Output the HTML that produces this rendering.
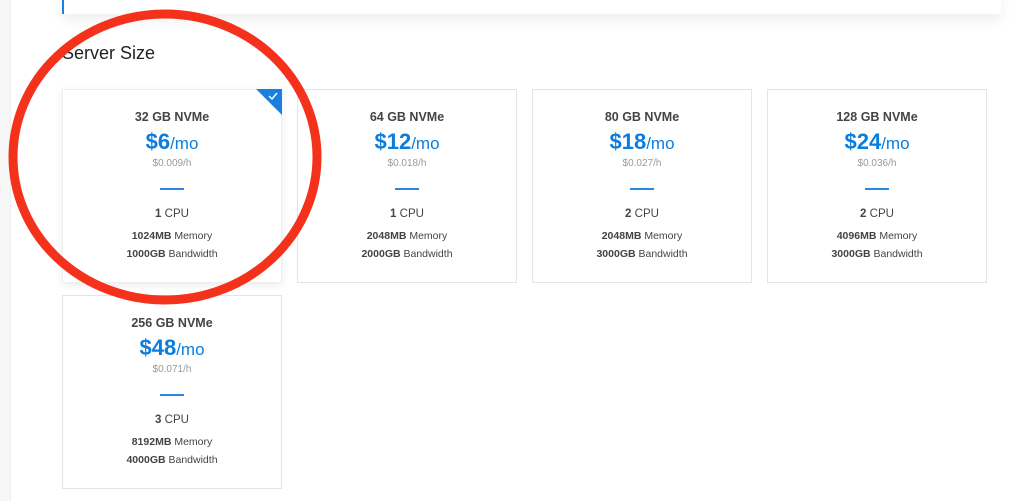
<!DOCTYPE html><html><head><style>
body{margin:0;width:1024px;height:501px;background:#fff;font-family:"Liberation Sans",sans-serif;position:relative;overflow:hidden}
.lstrip{position:absolute;left:0;top:0;width:10px;height:501px;background:#f7f7f7;border-right:1px solid #eee}
.top{position:absolute;left:62px;top:-10px;width:937px;height:24px;background:#fff;border-left:2px solid #1b7fe0;box-shadow:0 6px 14px rgba(0,0,0,.07)}
h2{position:absolute;left:62px;top:43px;margin:0;font-weight:normal;font-size:18px;color:#222}
.c{position:absolute;width:218px;height:192px;border:1px solid #e4e4e4;background:#fff;text-align:center;color:#444}
.c.sel{box-shadow:0 2px 8px rgba(0,0,0,.08);border-color:#eee}
.t{position:absolute;top:20px;width:100%;font-size:12.5px;font-weight:bold}
.p{position:absolute;top:39px;width:100%;font-size:22px;font-weight:bold;color:#0a7ee0}
.p span{font-weight:normal;font-size:17px}
.h{position:absolute;top:68px;width:100%;font-size:10px;color:#999}
.ln{position:absolute;top:98px;left:97px;width:24px;height:2px;background:#2a86e0}
.cpu{position:absolute;top:118px;width:100%;font-size:11.5px}
.m{position:absolute;top:140px;width:100%;font-size:10.5px}
.b{position:absolute;top:158px;width:100%;font-size:10.5px}
.chk{position:absolute;right:-1px;top:-1px;width:0;height:0;border-top:26px solid #1b7fe0;border-left:26px solid transparent}
</style></head><body>
<div class="lstrip"></div>
<div class="top"></div>
<h2>Server Size</h2>
<div class="c sel" style="left:62px;top:89px"><div class="chk"></div><svg style="position:absolute;right:2px;top:1px" width="12" height="10"><path d="M2 5l3 3 5-6" stroke="#fff" stroke-width="1.4" fill="none"/></svg><div class="t">32 GB NVMe</div><div class="p">$6<span>/mo</span></div><div class="h">$0.009/h</div><div class="ln"></div><div class="cpu"><b>1</b> CPU</div><div class="m"><b>1024MB</b> Memory</div><div class="b"><b>1000GB</b> Bandwidth</div></div>
<div class="c" style="left:297px;top:89px"><div class="t">64 GB NVMe</div><div class="p">$12<span>/mo</span></div><div class="h">$0.018/h</div><div class="ln"></div><div class="cpu"><b>1</b> CPU</div><div class="m"><b>2048MB</b> Memory</div><div class="b"><b>2000GB</b> Bandwidth</div></div>
<div class="c" style="left:532px;top:89px"><div class="t">80 GB NVMe</div><div class="p">$18<span>/mo</span></div><div class="h">$0.027/h</div><div class="ln"></div><div class="cpu"><b>2</b> CPU</div><div class="m"><b>2048MB</b> Memory</div><div class="b"><b>3000GB</b> Bandwidth</div></div>
<div class="c" style="left:767px;top:89px"><div class="t">128 GB NVMe</div><div class="p">$24<span>/mo</span></div><div class="h">$0.036/h</div><div class="ln"></div><div class="cpu"><b>2</b> CPU</div><div class="m"><b>4096MB</b> Memory</div><div class="b"><b>3000GB</b> Bandwidth</div></div>
<div class="c" style="left:62px;top:295px"><div class="t">256 GB NVMe</div><div class="p">$48<span>/mo</span></div><div class="h">$0.071/h</div><div class="ln"></div><div class="cpu"><b>3</b> CPU</div><div class="m"><b>8192MB</b> Memory</div><div class="b"><b>4000GB</b> Bandwidth</div></div>
<svg style="position:absolute;left:0;top:0" width="1024" height="501"><ellipse cx="165" cy="157" rx="152" ry="143" fill="none" stroke="#f4321c" stroke-width="9"/></svg>
</body></html>
